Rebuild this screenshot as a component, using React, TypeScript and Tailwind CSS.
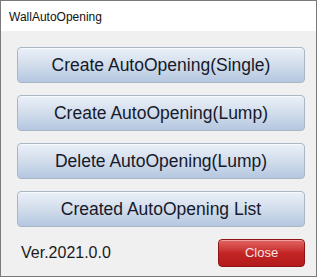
export default function App() {
  const labels = [
    "Create AutoOpening(Single)",
    "Create AutoOpening(Lump)",
    "Delete AutoOpening(Lump)",
    "Created AutoOpening List",
  ];
  return (
    <div
      className="w-[321px] h-[278px] bg-white overflow-hidden"
      style={{ fontFamily: '"Liberation Sans", Arial, sans-serif' }}
    >
      <div className="w-[317px] h-[277px] border border-[#7a7a7a] flex flex-col">
        <div className="h-[30px] bg-white flex items-center pl-[8px] pt-[2px] text-[12px] text-[#111]">
          WallAutoOpening
        </div>
        <div className="flex-1 bg-[#f0f0f0] flex flex-col px-[16px] pt-[16px]">
          <div className="flex flex-col gap-[12px] w-[288px]">
            {labels.map((l) => (
              <div
                key={l}
                className="h-[36px] rounded-[4px] border border-[#aab6c6] bg-gradient-to-b from-[#eaf0f8] via-[#d2ddec] to-[#b4c7e0] flex items-center justify-center text-[17.5px] text-[#15192a] shadow-[inset_0_1px_0_#f7faff]"
              >
                {l}
              </div>
            ))}
          </div>
          <div className="flex items-center justify-between w-[288px] mt-[12px]">
            <div className="pl-[4px] text-[16px] text-[#1a1a1a]">Ver.2021.0.0</div>
            <div className="w-[87px] h-[28px] rounded-[4px] border border-[#8e1414] bg-gradient-to-b from-[#e06464] via-[#c42525] to-[#b31a1a] flex items-center justify-center text-[13px] text-[#f4e6e6] shadow-[inset_0_1px_0_#f0a0a0]">
              Close
            </div>
          </div>
        </div>
      </div>
    </div>
  );
}
